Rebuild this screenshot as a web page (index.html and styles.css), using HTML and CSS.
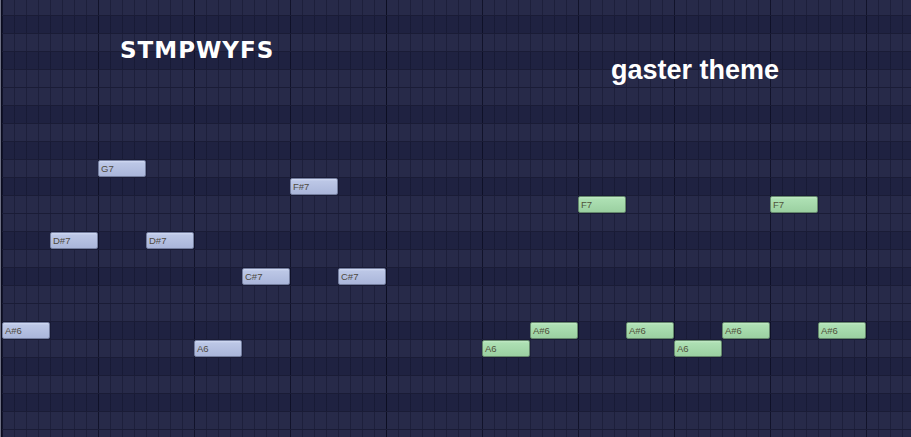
FILE: index.html
```html
<!DOCTYPE html>
<html lang="en">
<head>
<meta charset="utf-8">
<title>Piano roll</title>
<link rel="stylesheet" href="styles.css">
</head>
<body>
<div class="roll">
  <div class="rows">
    <div class="row w"></div><!-- E8 -->
    <div class="row b"></div><!-- D#8 -->
    <div class="row w"></div><!-- D8 -->
    <div class="row b"></div><!-- C#8 -->
    <div class="row w"></div><!-- C8 -->
    <div class="row w"></div><!-- B7 -->
    <div class="row b"></div><!-- A#7 -->
    <div class="row w"></div><!-- A7 -->
    <div class="row b"></div><!-- G#7 -->
    <div class="row w"></div><!-- G7 -->
    <div class="row b"></div><!-- F#7 -->
    <div class="row w"></div><!-- F7 -->
    <div class="row w"></div><!-- E7 -->
    <div class="row b"></div><!-- D#7 -->
    <div class="row w"></div><!-- D7 -->
    <div class="row b"></div><!-- C#7 -->
    <div class="row w"></div><!-- C7 -->
    <div class="row w"></div><!-- B6 -->
    <div class="row b"></div><!-- A#6 -->
    <div class="row w"></div><!-- A6 -->
    <div class="row b"></div><!-- G#6 -->
    <div class="row w"></div><!-- G6 -->
    <div class="row b"></div><!-- F#6 -->
    <div class="row w"></div><!-- F6 -->
    <div class="row w"></div><!-- E6 -->
  </div>

  <div class="label label-left">STMPWYFS</div>
  <div class="label label-right">gaster theme</div>

  <!-- pattern 1 -->
  <div class="note blue" style="--x:0;--r:18">A#6</div>
  <div class="note blue" style="--x:4;--r:13">D#7</div>
  <div class="note blue" style="--x:8;--r:9">G7</div>
  <div class="note blue" style="--x:12;--r:13">D#7</div>
  <div class="note blue" style="--x:16;--r:19">A6</div>
  <div class="note blue" style="--x:20;--r:15">C#7</div>
  <div class="note blue" style="--x:24;--r:10">F#7</div>
  <div class="note blue" style="--x:28;--r:15">C#7</div>

  <!-- pattern 2 -->
  <div class="note green" style="--x:40;--r:19">A6</div>
  <div class="note green" style="--x:44;--r:18">A#6</div>
  <div class="note green" style="--x:48;--r:11">F7</div>
  <div class="note green" style="--x:52;--r:18">A#6</div>
  <div class="note green" style="--x:56;--r:19">A6</div>
  <div class="note green" style="--x:60;--r:18">A#6</div>
  <div class="note green" style="--x:64;--r:11">F7</div>
  <div class="note green" style="--x:68;--r:18">A#6</div>
</div>
</body>
</html>
```

FILE: styles.css
```css
html, body {
  margin: 0;
  padding: 0;
  background: #1f2240;
}

.roll {
  position: relative;
  width: 911px;
  height: 437px;
  overflow: hidden;
  background: #1f2240;
}

/* key lanes: one row per semitone, 18px tall */
.rows {
  display: flex;
  flex-direction: column;
  margin-top: -2px;
}

.row {
  height: 18px;
  box-sizing: border-box;
  border-bottom: 1px solid #1a1c36;
  /* bar line, half-beat lines, step lines, then lane colour */
  background-image:
    linear-gradient(to right, transparent 386px, #0c0e22 386px, #0c0e22 387px, transparent 387px),
    repeating-linear-gradient(to right, transparent 0, transparent 2px, rgba(8, 9, 28, 0.55) 2px, rgba(8, 9, 28, 0.55) 3px, transparent 3px, transparent 96px),
    repeating-linear-gradient(to right, transparent 0, transparent 2px, rgba(10, 12, 32, 0.34) 2px, rgba(10, 12, 32, 0.34) 3px, transparent 3px, transparent 12px);
}

.row.w { background-color: #272a49; }
.row.b { background-color: #1f2241; }

/* edge strip on the far left */
.roll::before {
  content: "";
  position: absolute;
  left: 0;
  top: 0;
  bottom: 0;
  width: 2px;
  background: linear-gradient(to right, #6d7084 0, #6d7084 1px, #0b0c1f 1px);
  z-index: 2;
}

.label {
  position: absolute;
  color: #ffffff;
  white-space: nowrap;
}

.label-left {
  left: 120px;
  top: 37px;
  font-family: "DejaVu Sans", sans-serif;
  font-weight: bold;
  font-size: 23px;
  letter-spacing: 1px;
}

.label-right {
  left: 611px;
  top: 55px;
  font-family: "Liberation Sans", Arial, sans-serif;
  font-weight: bold;
  font-size: 27px;
  letter-spacing: 0;
}

/* notes sit on a 12px step / 18px lane canvas */
.note {
  position: absolute;
  left: calc(2px + var(--x) * 12px);
  top: calc(-2px + var(--r) * 18px);
  width: 48px;
  height: 17px;
  box-sizing: border-box;
  border-radius: 2px;
  padding-left: 2px;
  font-family: "Liberation Sans", Arial, sans-serif;
  font-size: 9.5px;
  line-height: 15px;
  color: #4e493e;
  z-index: 1;
}

.note.blue {
  border: 1px solid #737d9e;
  background: linear-gradient(to bottom, #d2dbf3 0, #bcc7e6 2px, #aab6da 100%);
}

.note.green {
  border: 1px solid #64886c;
  background: linear-gradient(to bottom, #c2e9c6 0, #ade0b3 2px, #9bd0a1 100%);
  color: #4f513a;
}
```
